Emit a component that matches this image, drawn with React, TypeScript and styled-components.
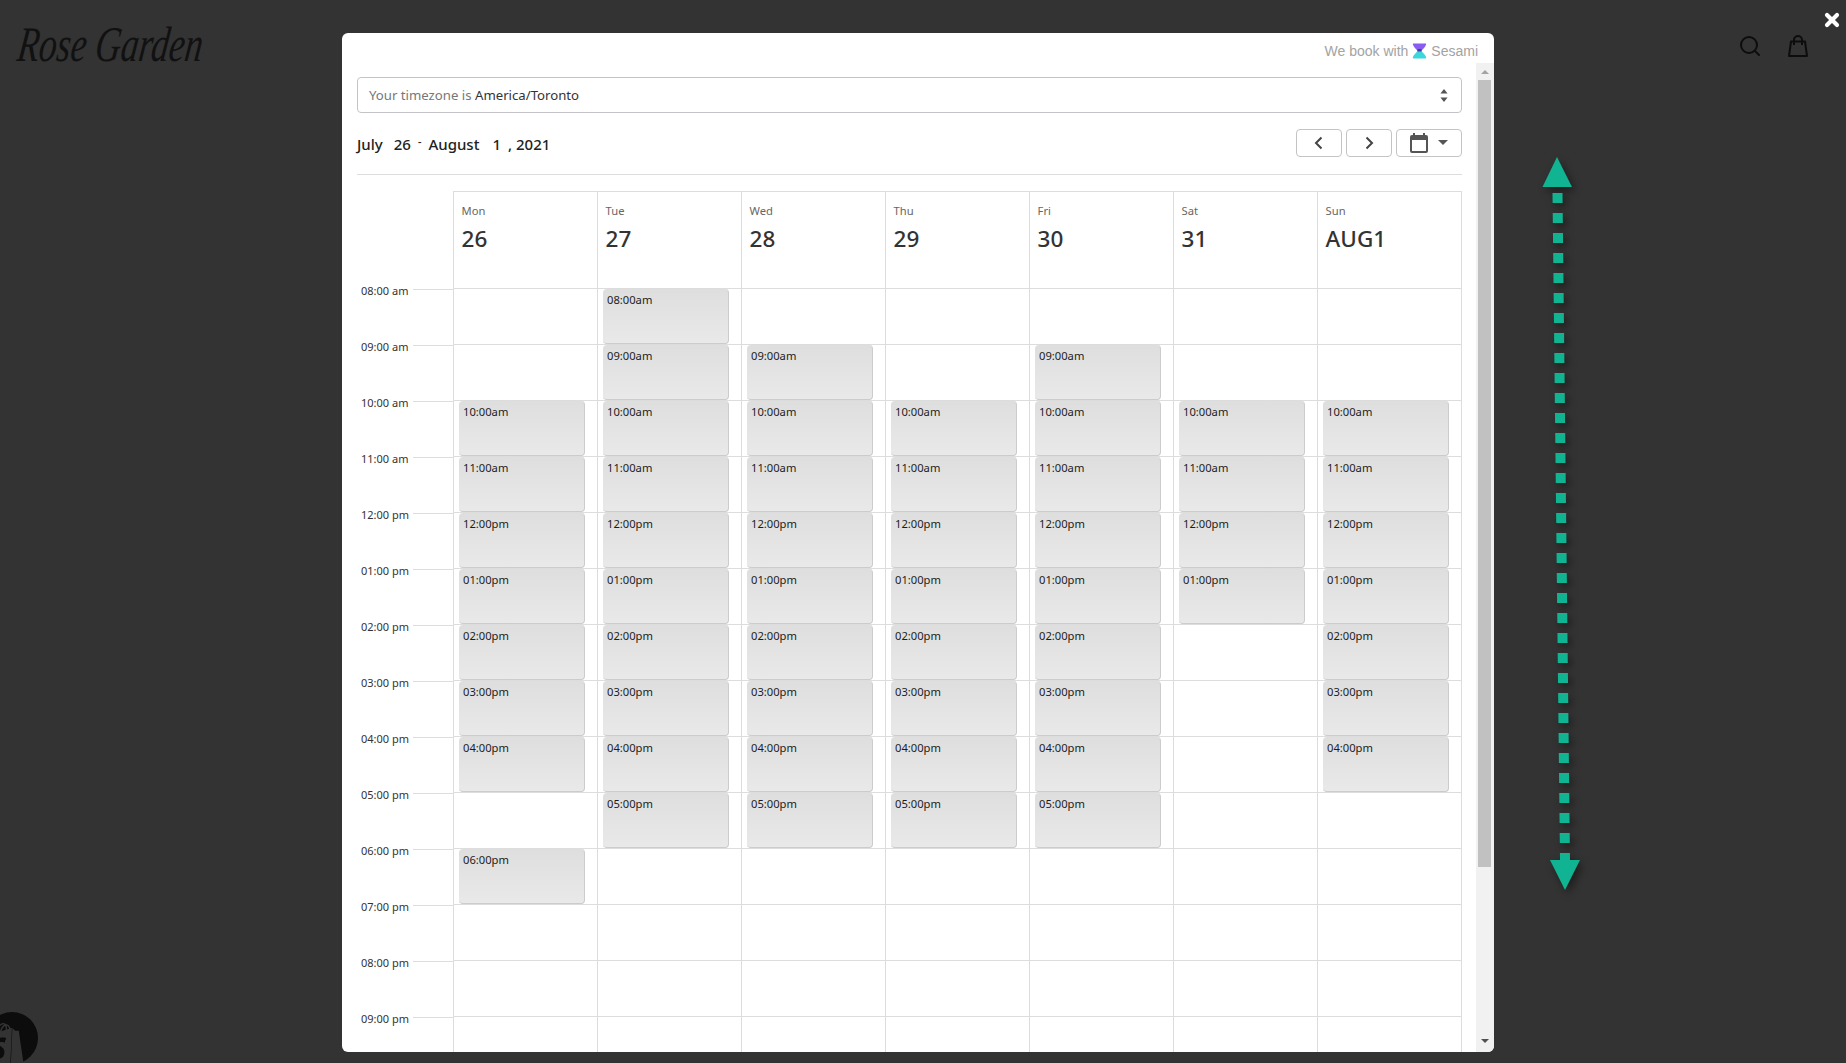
import { Search, X } from "lucide-react";
import { SiShopify } from "react-icons/si";
import styled, { createGlobalStyle } from "styled-components";

const HOURS = ["08:00", "09:00", "10:00", "11:00", "12:00", "01:00", "02:00", "03:00", "04:00", "05:00", "06:00", "07:00", "08:00", "09:00"];
const MERIDIEM = ["am", "am", "am", "am", "pm", "pm", "pm", "pm", "pm", "pm", "pm", "pm", "pm", "pm"];

const DAYS = [
  { name: "Mon", date: "26", open: [2, 3, 4, 5, 6, 7, 8, 10] },
  { name: "Tue", date: "27", open: [0, 1, 2, 3, 4, 5, 6, 7, 8, 9] },
  { name: "Wed", date: "28", open: [1, 2, 3, 4, 5, 6, 7, 8, 9] },
  { name: "Thu", date: "29", open: [2, 3, 4, 5, 6, 7, 8, 9] },
  { name: "Fri", date: "30", open: [1, 2, 3, 4, 5, 6, 7, 8, 9] },
  { name: "Sat", date: "31", open: [2, 3, 4, 5] },
  { name: "Sun", date: "AUG1", open: [2, 3, 4, 5, 6, 7, 8] },
];

const GlobalStyle = createGlobalStyle`
  html, body {
    margin: 0;
    height: 100%;
    overflow: hidden;
    background: #333;
  }
`;

const App = () => {
  return (
    <Page>
      <GlobalStyle />
      <TopBar>
        <Logo>Rose Garden</Logo>
        <ShopIcons>
          <Search size={24} strokeWidth={2} />
          <svg width="24" height="24" viewBox="0 0 24 24" fill="none" stroke="currentColor" strokeWidth="2">
            <path d="M5 7.500h14l2 14.500H3z" strokeLinejoin="round" />
            <path d="M8 11V6a4 4 0 0 1 8 0v5" />
          </svg>
        </ShopIcons>
      </TopBar>
      <ShopifyBadge>
        <SiShopify size={42} />
      </ShopifyBadge>

      <CloseButton>
        <X size={20} strokeWidth={5} />
      </CloseButton>

      <ScrollArrow width="60" height="760" viewBox="0 0 60 760">
        <polygon points="27,7 12.5,37 42,37" fill="#10b492" />
        <line x1="27.5" y1="43" x2="35" y2="710" stroke="#10b492" strokeWidth="10" strokeDasharray="10 10" />
        <polygon points="20,710 50,710 35,740" fill="#10b492" />
      </ScrollArrow>

      <Modal>
        <PoweredBy>
          We book with
          <svg width="15" height="16" viewBox="0 0 15 16">
            <path d="M1.500 0.500h12c.5 0 .8.4.6 1C13.200 4.500 10.500 6 9.500 8h-4C4.500 6 1.800 4.500.9 1.500c-.2-.6.1-1 .6-1z" fill="#8b5cf0" />
            <path d="M5.500 8h4c1 1.500 3.800 3.500 4.600 6 .3 1-.3 1.500-1.100 1.500H2c-.8 0-1.400-.5-1.100-1.500C1.700 11.500 4.500 9.500 5.500 8z" fill="#3dd6dc" />
            <rect x="5.500" y="6" width="4" height="2.500" fill="#3b3fa8" />
          </svg>
          Sesami
        </PoweredBy>
        <ModalBody>
          <Content>
            <TimezoneSelect>
              <span>
                Your timezone is <strong>America/Toronto</strong>
              </span>
              <svg width="8" height="13" viewBox="0 0 8 13" fill="#555">
                <path d="M4 0l3.600 4.500H.4zM4 13L.4 8.500h7.200z" />
              </svg>
            </TimezoneSelect>

            <WeekBar>
              <WeekTitle>
                <Month>July</Month>
                <span>26</span>
                <Dash>-</Dash>
                <span>August</span>
                <DayOne>1</DayOne>
                <span>, 2021</span>
              </WeekTitle>
              <WeekNav>
                <NavButton>
                  <svg width="10" height="14" viewBox="0 0 10 14" fill="none" stroke="#444" strokeWidth="2">
                    <path d="M7.500 1.500L2 7l5.500 5.500" />
                  </svg>
                </NavButton>
                <NavButton>
                  <svg width="10" height="14" viewBox="0 0 10 14" fill="none" stroke="#444" strokeWidth="2">
                    <path d="M2.500 1.500L8 7l-5.500 5.500" />
                  </svg>
                </NavButton>
                <CalendarButton>
                  <svg width="18" height="20" viewBox="0 0 18 20" fill="#555">
                    <path d="M3 0h2v2h8V0h2v2h1a2 2 0 0 1 2 2v14a2 2 0 0 1-2 2H2a2 2 0 0 1-2-2V4a2 2 0 0 1 2-2h1zM2 7v11h14V7z" />
                  </svg>
                  <svg width="10" height="5" viewBox="0 0 10 5" fill="#555">
                    <path d="M0 0h10L5 5z" />
                  </svg>
                </CalendarButton>
              </WeekNav>
            </WeekBar>

            <Calendar>
              <HeaderSpacer />
              {DAYS.map((day) => (
                <DayHead key={day.name}>
                  <DayName>{day.name}</DayName>
                  <DayDate>{day.date}</DayDate>
                </DayHead>
              ))}
              {HOURS.map((hour, row) => (
                <Row key={row}>
                  <TimeCell>
                    <TimeLabel>
                      {hour} {MERIDIEM[row]}
                    </TimeLabel>
                    <Tick />
                  </TimeCell>
                  {DAYS.map((day) => (
                    <DayCell key={day.name}>
                      {day.open.includes(row) && (
                        <Slot>
                          {hour}
                          {MERIDIEM[row]}
                        </Slot>
                      )}
                    </DayCell>
                  ))}
                </Row>
              ))}
            </Calendar>
          </Content>
          <Scrollbar>
            <ScrollUp />
            <ScrollThumb />
            <ScrollDown />
          </Scrollbar>
        </ModalBody>
      </Modal>
    </Page>
  );
};

const Page = styled.div`
  height: 100vh;
  overflow: hidden;
  background: #333;
  font-family: "Noto Sans", sans-serif;
`;

const TopBar = styled.header`
  display: flex;
  justify-content: space-between;
  align-items: flex-start;
  padding: 11px 36px 0 18px;
`;

const Logo = styled.div`
  font-family: "Liberation Serif", serif;
  font-style: italic;
  font-size: 35.5px;
  line-height: 66px;
  color: #111;
  transform-origin: left center;
  transform: scale(1, 1.4) skewX(-10deg);
`;

const ShopIcons = styled.div`
  display: flex;
  gap: 24px;
  margin-top: 23px;
  color: #0d0d0d;
`;

const ShopifyBadge = styled.div`
  position: absolute;
  left: -14px;
  top: 1012px;
  width: 52px;
  height: 52px;
  border-radius: 50%;
  background: #0c0c0c;
  color: #333;
  display: flex;
  align-items: center;
  justify-content: center;

  svg {
    flex: none;
    transform: translate(-7px, 6px);
  }
`;

const CloseButton = styled.div`
  position: absolute;
  top: 10px;
  left: 1822px;
  color: #fff;
  display: flex;
`;

const ScrollArrow = styled.svg`
  position: absolute;
  left: 1530px;
  top: 150px;
  filter: drop-shadow(3px 4px 4px rgba(0, 0, 0, 0.45));
`;

const Modal = styled.div`
  position: absolute;
  top: 33px;
  left: 342px;
  width: 1152px;
  height: 1019px;
  background: #fff;
  border-radius: 6px;
  overflow: hidden;
  display: flex;
  flex-direction: column;
`;

const PoweredBy = styled.div`
  height: 30px;
  flex: none;
  box-sizing: border-box;
  padding: 6px 16px 0 0;
  display: flex;
  align-items: center;
  justify-content: flex-end;
  gap: 4px;
  font-family: "Liberation Sans", Arial, sans-serif;
  font-size: 14px;
  color: #a3a3a3;
`;

const ModalBody = styled.div`
  flex: 1;
  min-height: 0;
  display: flex;
`;

const Content = styled.div`
  flex: 1;
  min-width: 0;
  padding: 14px 14px 0 15px;
  overflow: hidden;
`;

const TimezoneSelect = styled.div`
  height: 36px;
  box-sizing: border-box;
  border: 1px solid #c4c4c8;
  border-radius: 4px;
  padding: 0 13px 0 11px;
  display: flex;
  align-items: center;
  justify-content: space-between;
  font-size: 13.2px;
  color: #777;

  strong {
    font-weight: 400;
    color: #333;
  }
`;

const WeekBar = styled.div`
  height: 60px;
  border-bottom: 1px solid #ddd;
  display: flex;
  align-items: center;
  justify-content: space-between;
  padding-top: 1px;
  box-sizing: content-box;
`;

const WeekTitle = styled.div`
  display: flex;
  align-items: center;
  gap: 7px;
  font-size: 15px;
  font-weight: 500;
  color: #222;
`;

const Month = styled.span`
  margin-right: 4px;
`;

const Dash = styled.span`
  margin-top: -6px;
  font-size: 11px;
`;

const DayOne = styled.span`
  margin: 0 0 0 6px;
`;

const WeekNav = styled.div`
  display: flex;
  gap: 4px;
  margin-top: -3px;
`;

const NavButton = styled.div`
  width: 46px;
  height: 28px;
  box-sizing: border-box;
  border: 1px solid #c4c4c4;
  border-radius: 4px;
  display: flex;
  align-items: center;
  justify-content: center;
`;

const CalendarButton = styled(NavButton)`
  width: 66px;
  gap: 10px;
`;

const Calendar = styled.div`
  display: grid;
  grid-template-columns: 96px repeat(6, 144px) 145px;
  margin-top: 16px;
`;

const HeaderSpacer = styled.div``;

const DayHead = styled.div`
  height: 97px;
  box-sizing: border-box;
  padding: 10px 7.600px 0;
  border-top: 1px solid #ddd;
  border-left: 1px solid #ddd;

  &:nth-child(8) {
    border-right: 1px solid #ddd;
  }
`;

const DayName = styled.div`
  font-size: 11.2px;
  line-height: 18px;
  color: #666;
`;

const DayDate = styled.div`
  font-size: 22.5px;
  font-weight: 500;
  line-height: 34px;
  margin-top: 2px;
  color: #333;
`;

const Row = styled.div`
  display: contents;
`;

const TimeCell = styled.div`
  height: 56px;
  display: flex;
  align-items: flex-start;
  padding-left: 4px;
`;

const TimeLabel = styled.span`
  width: 52px;
  flex: none;
  margin-top: -5px;
  font-size: 11px;
  line-height: 16px;
  color: #333;
`;

const Tick = styled.div`
  flex: 1;
  height: 1px;
  margin-top: 1px;
  background: #ddd;
`;

const DayCell = styled.div`
  height: 56px;
  box-sizing: border-box;
  padding: 0 12px 0 5px;
  border-top: 1px solid #ddd;
  border-left: 1px solid #ddd;

  &:nth-child(8n) {
    border-right: 1px solid #ddd;
  }
`;

const Slot = styled.div`
  height: 55px;
  box-sizing: border-box;
  padding: 3px 4px;
  border-radius: 4px;
  border-right: 1px solid #ccc;
  border-bottom: 1px solid #ccc;
  background: linear-gradient(#dedede, #e9e9e9);
  font-size: 11.2px;
  line-height: 16px;
  color: #1c1c1c;
`;

const Scrollbar = styled.div`
  width: 18px;
  flex: none;
  box-sizing: border-box;
  padding: 0 3px 4px 2px;
  background: #f1f1f1;
  display: flex;
  flex-direction: column;
`;

const ScrollUp = styled.div`
  height: 17px;
  flex: none;
  display: flex;
  align-items: center;
  justify-content: center;

  &::before {
    content: "";
    border: 4px solid transparent;
    border-top: 0;
    border-bottom: 4px solid #a3a3a3;
  }
`;

const ScrollThumb = styled.div`
  height: 787px;
  flex: none;
  background: #c1c1c1;
`;

const ScrollDown = styled.div`
  flex: 1;
  display: flex;
  align-items: flex-end;
  justify-content: center;
  padding-bottom: 5px;

  &::before {
    content: "";
    border: 4px solid transparent;
    border-bottom: 0;
    border-top: 4px solid #505050;
  }
`;

export default App;
